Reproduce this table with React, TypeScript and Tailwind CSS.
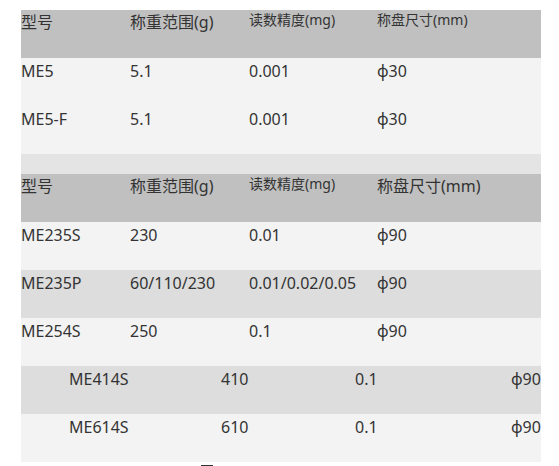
import React from "react";

type Row = { model: string; range: string; precision: string; pan: string };

const groupA: Row[] = [
  { model: "ME5", range: "5.1", precision: "0.001", pan: "φ30" },
  { model: "ME5-F", range: "5.1", precision: "0.001", pan: "φ30" },
];

const groupB: Row[] = [
  { model: "ME235S", range: "230", precision: "0.01", pan: "φ90" },
  { model: "ME235P", range: "60/110/230", precision: "0.01/0.02/0.05", pan: "φ90" },
  { model: "ME254S", range: "250", precision: "0.1", pan: "φ90" },
];

const groupC: Row[] = [
  { model: "ME414S", range: "410", precision: "0.1", pan: "φ90" },
  { model: "ME614S", range: "610", precision: "0.1", pan: "φ90" },
];

const cols = "grid grid-cols-[109px_119px_128px_1fr]";

function Header({ bigPan }: { bigPan?: boolean }) {
  return (
    <div className={`${cols} h-[48px] bg-[#c0c0c0] text-[16px] leading-[24px]`}>
      <div>型号</div>
      <div>称重范围(g)</div>
      <div className="text-[14px] leading-[20px]">读数精度(mg)</div>
      <div className={bigPan ? "" : "text-[14px] leading-[20px]"}>称盘尺寸(mm)</div>
    </div>
  );
}

function DataRow({ row, dark }: { row: Row; dark?: boolean }) {
  return (
    <div className={`${cols} h-[48px] pt-[1px] ${dark ? "bg-[#dddddd]" : "bg-[#f3f3f3]"}`}>
      <div>{row.model}</div>
      <div>{row.range}</div>
      <div>{row.precision}</div>
      <div>{row.pan}</div>
    </div>
  );
}

function OffsetRow({ row, dark }: { row: Row; dark?: boolean }) {
  return (
    <div
      className={`grid grid-cols-[152px_134px_156px_1fr] h-[48px] pt-[1px] pl-[48px] whitespace-nowrap ${
        dark ? "bg-[#dddddd]" : "bg-[#f3f3f3]"
      }`}
    >
      <div>{row.model}</div>
      <div>{row.range}</div>
      <div>{row.precision}</div>
      <div>{row.pan}</div>
    </div>
  );
}

export default function App() {
  return (
    <div className="min-h-[466px] bg-white pt-[10px] pl-[21px] font-['Noto_Sans','Noto_Sans_CJK_SC',sans-serif] text-[16px] leading-[24px] text-[#333]">
      <div className="w-[520px]">
        <Header />
        {groupA.map((r) => (
          <DataRow key={r.model} row={r} />
        ))}
        <div className="h-[20px] bg-[#e4e4e4]" />
        <Header bigPan />
        {groupB.map((r, i) => (
          <DataRow key={r.model} row={r} dark={i === 1} />
        ))}
        {groupC.map((r, i) => (
          <OffsetRow key={r.model} row={r} dark={i === 0} />
        ))}
      </div>
      <div className="ml-[180px] mt-[3px] h-[1px] w-[12px] bg-[#333]" />
    </div>
  );
}
